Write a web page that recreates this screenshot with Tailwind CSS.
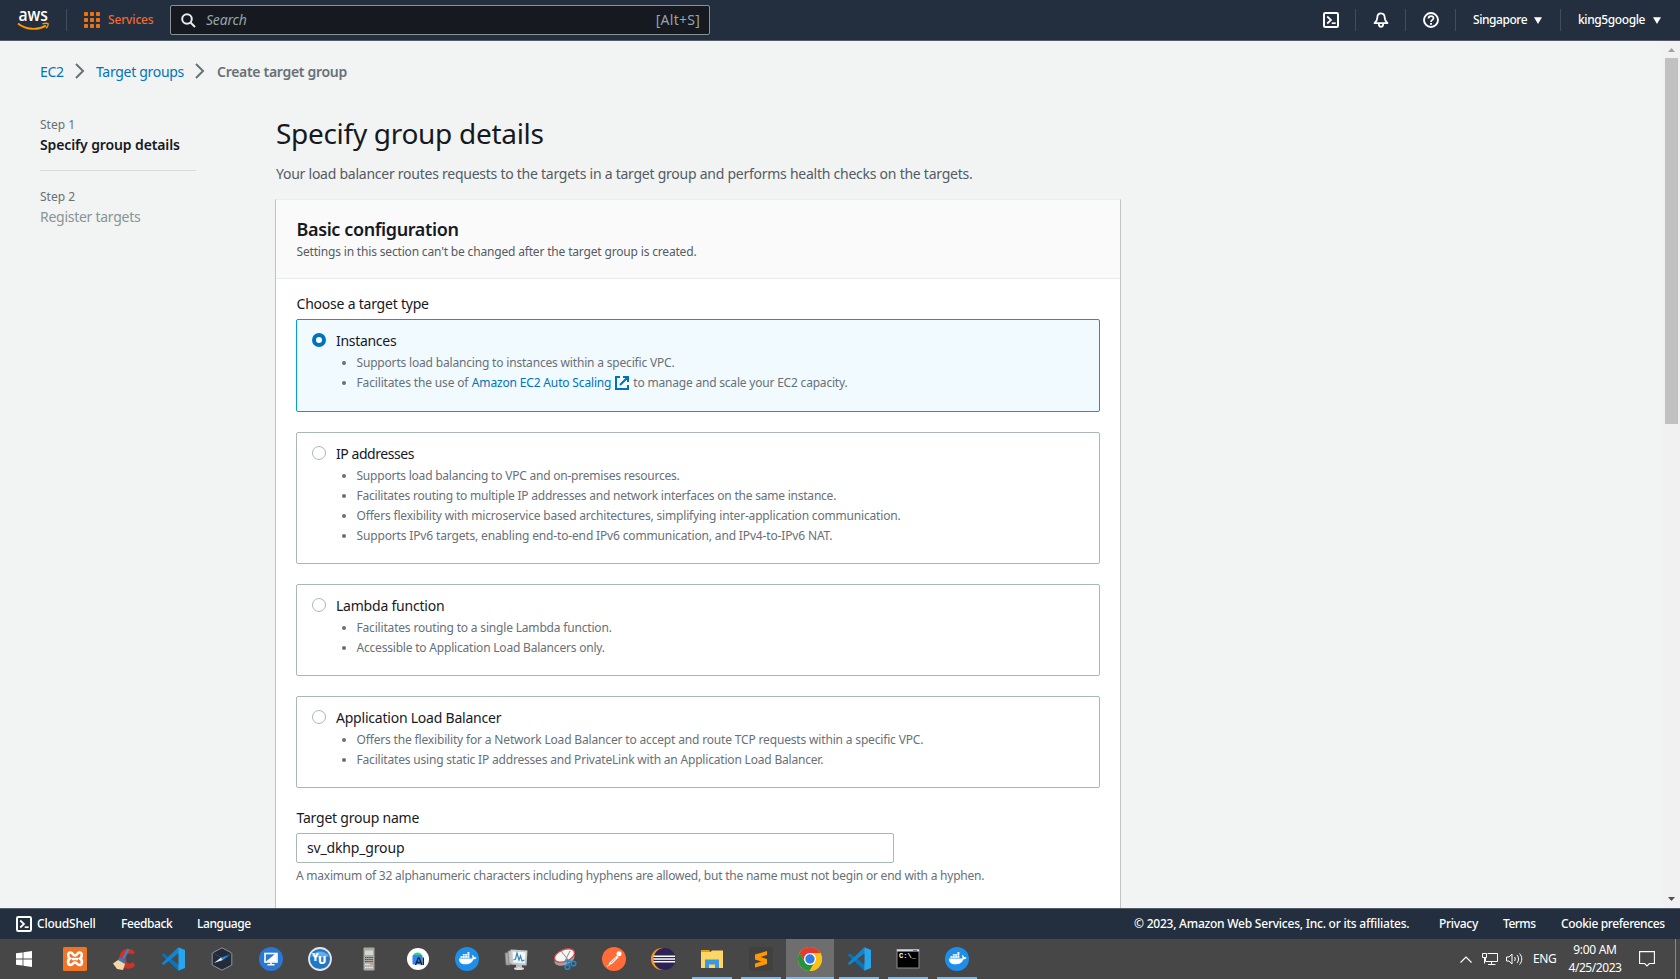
<!DOCTYPE html>
<html lang="en">
<head>
<meta charset="utf-8">
<title>Create target group</title>
<script src="https://cdn.jsdelivr.net/npm/@tailwindcss/browser@4"></script>
</head>
<body class="w-[1680px] h-[979px] overflow-hidden flex flex-col font-['Noto_Sans',sans-serif] text-[14px] text-[#16191f] bg-[#f2f3f3]">

<svg class="hidden">
  <symbol id="vscode" viewBox="0 0 24 24"><path d="M17.5 0.3 L7.4 10 2.8 6.500 0.6 7.700 17.500 23.800z" fill="#0a75bd"/><path d="M17.500 6.400 2.700 17.900 0.600 16.600 17 0.500z" fill="#1285cf"/><path d="M17.300 0.200 24 3v18l-6.700 2.800z" fill="#27a5ee"/><path d="M17.400 6.500v11L10.200 12z" fill="#4a4a4a"/></symbol>
  <symbol id="docker" viewBox="0 0 24 24"><circle cx="12" cy="12" r="12" fill="#1d8fea"/><path d="M4 11.400h13.200c.5-1 .3-2-.3-2.600l.7-.9c1 .6 1.400 1.400 1.400 2.300.9-.2 1.900 0 2.500.5-.6 1.300-1.700 1.500-3 1.500C17 16 14 17.300 10.500 17.300 6 17.300 3.800 15 4 11.400z" fill="#fff"/><path d="M5.500 9h2v2h-2zM7.800 9h2v2h-2zM10.100 9h2v2h-2zM12.400 9h2v2h-2zM7.800 6.900h2v1.800h-2zM10.100 6.900h2v1.800h-2zM12.400 5h2v3.700h-2z" fill="#e8f4fd"/></symbol>
  <symbol id="cloudshell" viewBox="0 0 16 16"><rect x="1" y="1" width="14" height="14" rx="1.300" fill="none" stroke="#fff" stroke-width="2"/><path d="M4.200 4.500 8 8l-3.800 3.500" fill="none" stroke="#fff" stroke-width="1.700"/><path d="M8.700 11.200h4" stroke="#fff" stroke-width="1.700"/></symbol>
</svg>

<header class="h-[41px] shrink-0 bg-[#232f3e] border-b border-[#545b64] flex items-center text-[12px] font-medium text-white">
  <svg class="ml-[17px] w-[33px] h-10 shrink-0" viewBox="0 0 33 40"><text x="1.500" y="20.700" font-family="Open Sans" font-weight="600" font-size="18" textLength="29.500" lengthAdjust="spacingAndGlyphs" fill="#fff">aws</text><path d="M1 23.500C8.500 29.800 20.500 30.600 29 25.600" fill="none" stroke="#ff9900" stroke-width="1.900"/><path d="M25.500 23.900c2-.9 5-1 5.500-.3.400.9-.5 3.300-1.900 4.600" fill="none" stroke="#ff9900" stroke-width="1.500"/></svg>
  <div class="ml-4 w-px h-[22px] bg-[#414d5c]"></div>
  <svg class="ml-[17px] w-4 h-4 shrink-0" viewBox="0 0 16 16" fill="#ec7211"><rect width="4" height="4" rx=".8"/><rect x="6" width="4" height="4" rx=".8"/><rect x="12" width="4" height="4" rx=".8"/><rect y="6" width="4" height="4" rx=".8"/><rect x="6" y="6" width="4" height="4" rx=".8"/><rect x="12" y="6" width="4" height="4" rx=".8"/><rect y="12" width="4" height="4" rx=".8"/><rect x="6" y="12" width="4" height="4" rx=".8"/><rect x="12" y="12" width="4" height="4" rx=".8"/></svg>
  <span class="ml-2 w-[62px] tracking-[-0.15px] text-[#f2682a]">Services</span>
  <div class="w-[540px] h-[30px] shrink-0 rounded-[2px] border border-[#879596] bg-[#16191f] flex items-center text-[14px] font-normal text-[#95a5a6]">
    <svg class="ml-[10px] w-[15px] h-[15px]" viewBox="0 0 15 15" fill="none" stroke="#eaeded" stroke-width="2"><circle cx="6" cy="6" r="4.800"/><path d="m9.500 9.500 4.500 4.500"/></svg>
    <span class="ml-[10px] -mt-px italic tracking-[-0.2px]">Search</span>
    <span class="ml-auto mr-[9px] -mt-px tracking-[0.25px]">[Alt+S]</span>
  </div>
  <div class="ml-auto flex items-center">
    <svg class="w-4 h-4"><use href="#cloudshell"/></svg>
    <div class="ml-4 w-px h-[22px] bg-[#414d5c]"></div>
    <svg class="ml-[17px] w-4 h-4" viewBox="0 0 16 16" fill="none" stroke="#fff" stroke-width="1.800"><path d="M8 1.300c-2.700 0-3.700 2-3.700 4.500 0 2.200-1 3.800-2.800 5.300h13c-1.800-1.500-2.800-3.100-2.800-5.300 0-2.500-1-4.500-3.700-4.500z" stroke-linejoin="round"/><path d="M5.800 11.800c0 1.900.8 3 2.200 3s2.200-1.100 2.200-3"/></svg>
    <div class="ml-4 w-px h-[22px] bg-[#414d5c]"></div>
    <svg class="ml-[17px] w-4 h-4" viewBox="0 0 16 16" fill="none" stroke="#fff" stroke-width="1.900"><circle cx="8" cy="8" r="7"/><path d="M5.500 6.600C5.500 4.900 6.500 4.200 8 4.200s2.500.8 2.500 2.100C10.500 8 8 7.900 8 10" stroke-width="1.700"/><path d="M8 11v1.700"/></svg>
    <div class="ml-4 w-px h-[22px] bg-[#414d5c]"></div>
    <span class="ml-[17px] w-[61px] tracking-[-0.45px]">Singapore</span>
    <svg class="w-2 h-[7px]" viewBox="0 0 8 7"><path d="M0 .3h8L4 7z" fill="#fff"/></svg>
    <div class="ml-[18px] w-px h-[22px] bg-[#414d5c]"></div>
    <span class="ml-[17px] w-[75px] tracking-[-0.4px]">king5google</span>
    <svg class="w-2 h-[7px] mr-[19px]" viewBox="0 0 8 7"><path d="M0 .3h8L4 7z" fill="#fff"/></svg>
  </div>
</header>

<div class="h-[867px] flex shrink-0 overflow-hidden">
  <main class="flex-1 pl-10 overflow-hidden">
    <nav class="mt-[19px] h-[22px] flex items-center text-[#0073bb] tracking-[-0.3px]">
      <span class="w-[35px]">EC2</span>
      <svg class="w-[10px] h-4" viewBox="0 0 10 16" fill="none" stroke="#687078" stroke-width="2"><path d="m1 1 7 7-7 7"/></svg>
      <span class="ml-[11px] w-[99px]">Target groups</span>
      <svg class="w-[10px] h-4" viewBox="0 0 10 16" fill="none" stroke="#687078" stroke-width="2"><path d="m1 1 7 7-7 7"/></svg>
      <span class="ml-3 font-semibold text-[#687078]">Create target group</span>
    </nav>
    <div class="flex">
      <aside class="w-[156px] pt-[33px] mr-[79px] shrink-0">
        <div class="h-5 leading-5 text-[12px] text-[#687078]">Step 1</div>
        <div class="h-5 leading-5 font-semibold tracking-[-0.12px]">Specify group details</div>
        <div class="mt-[15px] h-px bg-[#d5dbdb]"></div>
        <div class="mt-4 h-5 leading-5 text-[12px] text-[#687078]">Step 2</div>
        <div class="h-5 leading-5 tracking-[-0.27px] text-[#879596]">Register targets</div>
      </aside>
      <section class="w-[846px]">
        <h1 class="mt-[33px] h-9 leading-9 pl-px text-[28px] tracking-[-0.3px]">Specify group details</h1>
        <p class="mt-[13px] h-5 leading-5 pl-px tracking-[-0.25px] text-[#545b64]">Your load balancer routes requests to the targets in a target group and performs health checks on the targets.</p>
        <div class="mt-[15px] h-[760px] bg-white border border-[#c0c4c4] border-t-[#eaeded]">
          <div class="h-[79px] bg-[#fafafa] border-b border-[#eaeded] pl-[20.5px] pt-[17px]">
            <h2 class="h-6 leading-6 text-[18px] font-semibold tracking-[-0.38px]">Basic configuration</h2>
            <p class="mt-px h-5 leading-5 text-[12px] tracking-[-0.17px] text-[#545b64]">Settings in this section can't be changed after the target group is created.</p>
          </div>
          <div class="px-5 pt-[15px] tracking-[-0.22px]">
            <div class="h-5 leading-5 pl-[0.5px]">Choose a target type</div>
            <div class="mt-[5px] h-[93px] rounded-[2px] border border-[#00a1c9] bg-[#f1faff] pl-[15px] pt-[10px]">
              <div class="h-5 flex items-center gap-[10px]"><span class="w-[14px] h-[14px] rounded-full border-4 border-[#0073bb] bg-white"></span><span class="tracking-[-0.3px]">Instances</span></div>
              <ul class="mt-[3px] pl-[44.5px] list-disc text-[12px] leading-5 tracking-[-0.18px] text-[#687078]">
                <li>Supports load balancing to instances within a specific VPC.</li>
                <li><div class="h-5 flex items-center"><span class="tracking-[-0.15px]">Facilitates the use of</span><span class="ml-[3.5px] tracking-[-0.16px] text-[#0073bb]">Amazon EC2 Auto Scaling</span><svg class="mx-[4px] w-[14px] h-[14px]" viewBox="0 0 14 14" fill="none" stroke="#0073bb" stroke-width="2"><path d="M5 1H1v12h12V9M8 1h5v5M12.500 1.500 5 9"/></svg><span class="tracking-[-0.2px]">to manage and scale your EC2 capacity.</span></div></li>
              </ul>
            </div>
            <div class="mt-5 h-[132px] rounded-[2px] border border-[#aab7b8] pl-[15px] pt-[10px]">
              <div class="h-5 flex items-center gap-[10px]"><span class="w-[14px] h-[14px] rounded-full border border-[#aab7b8] bg-white"></span><span class="tracking-[-0.45px]">IP addresses</span></div>
              <ul class="mt-[3px] pl-[44.5px] list-disc text-[12px] leading-5 text-[#687078]">
                <li class="tracking-[-0.22px]">Supports load balancing to VPC and on-premises resources.</li>
                <li class="tracking-[-0.22px]">Facilitates routing to multiple IP addresses and network interfaces on the same instance.</li>
                <li class="tracking-[-0.18px]">Offers flexibility with microservice based architectures, simplifying inter-application communication.</li>
                <li class="tracking-[-0.15px]">Supports IPv6 targets, enabling end-to-end IPv6 communication, and IPv4-to-IPv6 NAT.</li>
              </ul>
            </div>
            <div class="mt-5 h-[92px] rounded-[2px] border border-[#aab7b8] pl-[15px] pt-[10px]">
              <div class="h-5 flex items-center gap-[10px]"><span class="w-[14px] h-[14px] rounded-full border border-[#aab7b8] bg-white"></span><span>Lambda function</span></div>
              <ul class="mt-[3px] pl-[44.5px] list-disc text-[12px] leading-5 text-[#687078]">
                <li class="tracking-[-0.18px]">Facilitates routing to a single Lambda function.</li>
                <li class="tracking-[-0.2px]">Accessible to Application Load Balancers only.</li>
              </ul>
            </div>
            <div class="mt-5 h-[92px] rounded-[2px] border border-[#aab7b8] pl-[15px] pt-[10px]">
              <div class="h-5 flex items-center gap-[10px]"><span class="w-[14px] h-[14px] rounded-full border border-[#aab7b8] bg-white"></span><span>Application Load Balancer</span></div>
              <ul class="mt-[3px] pl-[44.5px] list-disc text-[12px] leading-5 text-[#687078]">
                <li class="tracking-[-0.165px]">Offers the flexibility for a Network Load Balancer to accept and route TCP requests within a specific VPC.</li>
                <li class="tracking-[-0.19px]">Facilitates using static IP addresses and PrivateLink with an Application Load Balancer.</li>
              </ul>
            </div>
            <div class="mt-5 h-5 leading-5 pl-[0.5px]">Target group name</div>
            <div class="mt-[5px] w-[598px] h-[30px] rounded-[2px] border border-[#aab7b8] pl-[10px] leading-7 tracking-[-0.16px]">sv_dkhp_group</div>
            <p class="mt-[3px] h-5 leading-5 text-[12px] text-[#687078]">A maximum of 32 alphanumeric characters including hyphens are allowed, but the name must not begin or end with a hyphen.</p>
          </div>
        </div>
      </section>
    </div>
  </main>
  <div class="w-[17px] bg-[#f1f1f1] flex flex-col items-center">
    <svg class="mt-[7px] w-[7px] h-1" viewBox="0 0 7 4"><path d="M0 4h7L3.500 0z" fill="#a3a3a3"/></svg>
    <div class="mt-[6px] w-[13px] h-[366px] bg-[#c1c1c1]"></div>
    <svg class="mt-auto mb-[7px] w-[7px] h-1" viewBox="0 0 7 4"><path d="M0 0h7L3.500 4z" fill="#505050"/></svg>
  </div>
</div>

<footer class="h-[31px] shrink-0 bg-[#232f3e] border-t border-[#545b64] flex items-center text-[12px] font-medium text-white">
  <svg class="ml-4 w-4 h-4"><use href="#cloudshell"/></svg>
  <span class="ml-[5px] w-[84px] tracking-[-0.22px]">CloudShell</span>
  <span class="w-[76px] tracking-[-0.4px]">Feedback</span>
  <span class="tracking-[-0.4px]">Language</span>
  <span class="ml-auto w-[305px] whitespace-nowrap tracking-[-0.23px]">© 2023, Amazon Web Services, Inc. or its affiliates.</span>
  <span class="w-[64px] tracking-[-0.3px]">Privacy</span>
  <span class="w-[58px] tracking-[-0.5px]">Terms</span>
  <span class="w-[119px] tracking-[-0.37px]">Cookie preferences</span>
</footer>

<div class="h-10 shrink-0 bg-[#474747] flex items-center text-white text-[12px]">
  <div class="w-12 mr-[3px] flex justify-center"><svg class="w-4 h-4" viewBox="0 0 16 16" fill="#fff"><path d="M0 2.300 6.600 1.400V7.600H0zM7.400 1.200 16 0v7.600H7.400zM0 8.400h6.600v6.200L0 13.700zM7.400 8.400H16V16l-8.600-1.200z"/></svg></div>
  <div class="flex gap-px h-10">
    <div class="w-12 flex items-center justify-center"><svg class="w-6 h-6" viewBox="0 0 24 24"><rect width="24" height="24" rx="1.500" fill="#f07427"/><path d="M7.500 5.500c-3 0-3 4.500-.5 6-2.800 1.500-2.500 6.500.8 6.500C10 18 9.500 15.500 12 15.500S14 18 16.300 18c3.300 0 3.500-5 .7-6.500 2.500-1.500 2.500-6-.5-6-2.500 0-2 3-4.500 3s-2-3-4.500-3z" fill="none" stroke="#fff" stroke-width="2.600"/><path d="M9 12h6" stroke="#fff" stroke-width="2.500"/></svg></div>
    <div class="w-12 flex items-center justify-center"><svg class="w-6 h-6" viewBox="0 0 24 24"><path d="M23 5.500C20 .5 12 .500 9 5.500c-3 5-2 13 3 15.500 4 1.800 9 .5 11-2.500l-2-3.500c-3 2.500-6.500 2-7-2-.5-5 2-8.500 6-5.500z" fill="#cf3328"/><path d="M16.500 2 11 12" stroke="#3585d0" stroke-width="2.200"/><path d="M7.500 10.500 14 14l-1.500 3-7-4z" fill="#3a78b5"/><path d="M6 13 1 16.500 5 22l6 1 2-6z" fill="#f3d8a5"/></svg></div>
    <div class="w-12 flex items-center justify-center"><svg class="w-6 h-6"><use href="#vscode"/></svg></div>
    <div class="w-12 flex items-center justify-center"><svg class="w-6 h-6" viewBox="0 0 24 24"><path d="M12 .8 21.800 6v12L12 23.200 2.200 18V6z" fill="#232a38" stroke="#8d949c" stroke-width="1"/><path d="M2.500 6 12 11l9.500-5" fill="none" stroke="#3b4454"/><path d="m4 16 7-5.500 2 2.500z" fill="#e3e9ef"/><path d="m20 8-9 2.500 2 2.500z" fill="#1e8df0"/></svg></div>
    <div class="w-12 flex items-center justify-center"><svg class="w-6 h-6" viewBox="0 0 24 24"><circle cx="12" cy="12" r="12" fill="#2b78d3"/><rect x="6" y="6.500" width="12" height="8.500" fill="#2b78d3" stroke="#fff" stroke-width="1.600"/><path d="M7 14.500 16 7h1.500v7.500z" fill="#fff"/><path d="M12 15v2.500M8.500 17.800h7" stroke="#fff" stroke-width="1.500"/></svg></div>
    <div class="w-12 flex items-center justify-center"><svg class="w-6 h-6" viewBox="0 0 24 24"><circle cx="12" cy="12" r="11" fill="#2176c8" stroke="#e4e6e8" stroke-width="1.800"/><path d="M3 9c4-6 14-6 18 0-6 2-12 2-18 0z" fill="#62aee8"/><text x="4" y="14" font-family="Open Sans" font-weight="800" font-size="10" fill="#fff">Y</text><text x="10" y="17" font-family="Open Sans" font-weight="800" font-size="11" fill="#fff">U</text></svg></div>
    <div class="w-12 flex items-center justify-center"><svg class="w-6 h-6" viewBox="0 0 24 24"><rect x="6.500" y=".5" width="11" height="23" rx="1" fill="#a9a9a7"/><rect x="8" y="3.500" width="8" height="4.500" fill="#cfdccb"/><path d="M8 10.500h8M8 12.500h8M8 14.500h8" stroke="#4d4d4d" stroke-dasharray="1.500 .6"/><path d="M8 17.500h8M8 20.500h8" stroke="#eee" stroke-width="1.500" stroke-dasharray="1.500 .6"/><path d="M13 17h3" stroke="#e38a60" stroke-width="1.500"/></svg></div>
    <div class="w-12 flex items-center justify-center"><svg class="w-6 h-6" viewBox="0 0 24 24"><circle cx="12" cy="12" r="11" fill="#fff"/><path d="M7 8.500c1-4 8-4 9 0z" fill="#2fd07f"/><rect x="6.500" y="8" width="10" height="9.500" rx="1" fill="#3a83f4"/><path d="m9.500 18 2.700-7h1l2.600 7M10.700 15.500h4M17.300 10.500V18" fill="none" stroke="#0e2a45" stroke-width="1.400"/></svg></div>
    <div class="w-12 flex items-center justify-center"><svg class="w-6 h-6"><use href="#docker"/></svg></div>
    <div class="w-12 flex items-center justify-center"><svg class="w-6 h-6" viewBox="0 0 24 24"><path d="m1 6 6-1v13H2z" fill="#a8aca9" stroke="#777" stroke-width=".7"/><path d="m4 4 8-1v14H5z" fill="#bdc2bd" stroke="#777" stroke-width=".7"/><path d="m6.500 2.500 17 1-1 15-15-1z" fill="#c6cbc7"/><path d="m8.500 4.500 13 .8-.8 11-11.500-.8z" fill="#f3f8fc"/><path d="m9.500 13 2-1 1.500-6 2 7 1.500-4 1.500 5 2.500-1" fill="none" stroke="#3c87bd" stroke-width="1.200"/><path d="M12 18h6v2.500H12z" fill="#bbb"/><ellipse cx="15" cy="21.500" rx="5" ry="1.500" fill="#ddd"/></svg></div>
    <div class="w-12 flex items-center justify-center"><svg class="w-6 h-6" viewBox="0 0 24 24"><ellipse cx="11.500" cy="12" rx="10.500" ry="6" transform="rotate(-22 11.500 12)" fill="#a0a0a0"/><ellipse cx="11.500" cy="8.500" rx="10.500" ry="5.800" transform="rotate(-22 11.500 8.500)" fill="#f6f6f6" stroke="#d94242" stroke-width="1.200"/><path d="m8 4 8 10M17 4 12 14" stroke="#888" stroke-width="1"/><circle cx="14.500" cy="20" r="2.300" fill="none" stroke="#2389ce" stroke-width="1.600"/><circle cx="20.500" cy="16.500" r="2.300" fill="none" stroke="#2389ce" stroke-width="1.600"/><path d="m13 13 6 2M15 17.500l-1-5" stroke="#2389ce" stroke-width="1.500"/></svg></div>
    <div class="w-12 flex items-center justify-center"><svg class="w-6 h-6" viewBox="0 0 24 24"><circle cx="12" cy="12" r="12" fill="#ff6c37"/><circle cx="17" cy="6.800" r="2.500" fill="#fff"/><path d="m15 8.500 1.700 1.700-6 6-4.200 2.300 1-3z" fill="#fff"/><path d="m9 16 5-5" stroke="#ff6c37" stroke-width=".7"/><path d="m5 19.500 3-2" stroke="#fff" stroke-width="1"/></svg></div>
    <div class="w-12 flex items-center justify-center"><svg class="w-6 h-6" viewBox="0 0 24 24"><circle cx="11" cy="12" r="11" fill="#f7941e"/><circle cx="13.500" cy="12" r="11" fill="#2c2255"/><path d="M2.500 9.300h21.500M2.500 12h21.500M2.500 14.700h21.500" stroke="#fff" stroke-width="1.500"/></svg></div>
    <div class="relative w-12 flex items-center justify-center"><svg class="w-6 h-6" viewBox="0 0 24 24"><path d="M1 3h8l1.500 2H1z" fill="#e0a10a"/><path d="M1 5h9.500l1.500-1.500H23V21H1z" fill="#fdd663"/><path d="M5 12.500h14V21h-4v-3.500H9V21H5z" fill="#3a97e0"/></svg><div class="absolute bottom-0 w-10 h-[2px] bg-[#76b9ed]"></div></div>
    <div class="relative w-12 flex items-center justify-center"><svg class="w-6 h-6" viewBox="0 0 24 24"><rect width="24" height="24" rx="1.500" fill="#414141"/><path d="M18 4v4l-6.500 2L18 12v5L6 20.500v-4l6.500-2L6 12.500v-5z" fill="#ff9800"/></svg><div class="absolute bottom-0 w-10 h-[2px] bg-[#76b9ed]"></div></div>
    <div class="relative w-12 bg-[#6e6e6e] flex items-center justify-center"><svg class="w-6 h-6" viewBox="0 0 24 24"><circle cx="12" cy="12" r="12" fill="#fbc116"/><path d="M1.600 6A12 12 0 0 1 22.400 6H12L6.800 15z" fill="#e33b2e"/><path d="M1.600 6 6.800 15c1 1.800 3 3 5.200 3 1.800 0 3-.5 3.700-1.200L11.500 24A12 12 0 0 1 1.600 6z" fill="#229342"/><path d="M12 6h10.400A12 12 0 0 1 11.500 24L17.200 15z" fill="#fbc116"/><circle cx="12" cy="12" r="6" fill="#fff"/><circle cx="12" cy="12" r="4.700" fill="#2f7de9"/></svg><div class="absolute bottom-0 w-12 h-[2px] bg-[#76b9ed]"></div></div>
    <div class="relative w-12 flex items-center justify-center"><svg class="w-6 h-6"><use href="#vscode"/></svg><div class="absolute bottom-0 w-10 h-[2px] bg-[#76b9ed]"></div></div>
    <div class="relative w-12 flex items-center justify-center"><svg class="w-6 h-6" viewBox="0 0 24 24"><rect x="1" y="2.500" width="22" height="18.500" fill="#000" stroke="#8d8d8d"/><path d="M1 3.500h22" stroke="#d5dbe2" stroke-width="2"/><path d="M17 3.500h4" stroke="#68788c"/><text x="3" y="11" font-family="Liberation Mono" font-weight="700" font-size="7" textLength="17" lengthAdjust="spacingAndGlyphs" fill="#fff">C:\_</text></svg><div class="absolute bottom-0 w-10 h-[2px] bg-[#76b9ed]"></div></div>
    <div class="relative w-12 flex items-center justify-center"><svg class="w-6 h-6"><use href="#docker"/></svg><div class="absolute bottom-0 w-10 h-[2px] bg-[#76b9ed]"></div></div>
  </div>
  <div class="ml-auto flex items-center h-10">
    <svg class="w-3 h-[7px]" viewBox="0 0 12 7" fill="none" stroke="#fff" stroke-width="1.200"><path d="m.5 6.500 5.500-5.500 5.500 5.500"/></svg>
    <svg class="ml-[10px] w-4 h-[14px]" viewBox="0 0 16 14" fill="none" stroke="#fff"><path d="M5.500 1.500h10v8H3.500v-4M9.500 9.500v3M6 12.500h7.500M.5 1.500h4v4h-4zM2.500 5.500v6"/></svg>
    <svg class="ml-2 w-[17px] h-[14px]" viewBox="0 0 17 14" fill="none" stroke="#fff"><path d="M.5 5v4H3l3 3V2L3 5zM8.500 5c1 1.200 1 2.800 0 4M11 3c2 2.300 2 5.700 0 8M13.500 1.500c3 3 3 8 0 11"/></svg>
    <span class="ml-[10px] w-[36px] tracking-[-0.4px]">ENG</span>
    <div class="w-[52px] flex flex-col items-center whitespace-nowrap leading-[18px]"><span class="tracking-[-0.3px]">9:00 AM</span><span class="tracking-[-0.45px]">4/25/2023</span></div>
    <svg class="ml-[18px] w-4 h-4" viewBox="0 0 16 16" fill="none" stroke="#fff" stroke-width="1.100"><path d="M.6.6h14.800v11.900h-5L8 15l-2.400-2.500h-5z"/></svg>
    <div class="ml-5 w-px h-10 bg-[#8a8a8a]"></div><div class="w-1"></div>
  </div>
</div>
</body>
</html>
